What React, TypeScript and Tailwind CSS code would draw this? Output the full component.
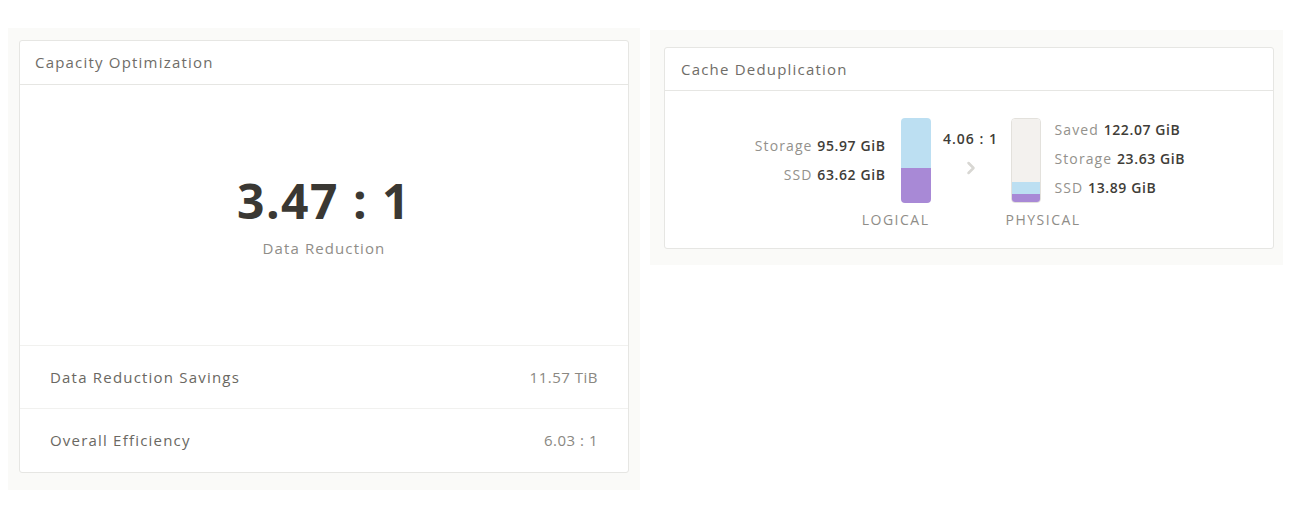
import { ChevronRight } from 'lucide-react'

const font = { fontFamily: '"Open Sans", "Liberation Sans", sans-serif' }

const StatRow = ({ label, value, last }: { label: string; value: string; last?: boolean }) => (
    <div className={`flex items-center justify-between h-[63px] px-[30px] ${last ? '' : 'border-b border-[#f1f1ef]'}`}>
        <span className="text-[15px] tracking-[1.2px] text-[#6a6862]">{label}</span>
        <span className="text-[15px] tracking-[0.5px] text-[#8a8882]">{value}</span>
    </div>
)

const CapacityCard = () => (
    <div className="w-[632px] bg-[#fafaf8] pt-[12px] pl-[11px] pb-[17px]">
        <div className="w-[610px] h-[433px] bg-white border border-[#e6e6e3] rounded-[3px] flex flex-col">
            <div className="h-[44px] flex items-center px-[15px] border-b border-[#e6e6e3]">
                <span className="text-[15px] tracking-[1.2px] text-[#6f6d68]">Capacity Optimization</span>
            </div>
            <div className="h-[261px] flex flex-col items-center border-b border-[#f1f1ef] pt-[88px]">
                <span className="text-[48px] leading-[56px] font-bold text-[#3a3833] tracking-[1.5px]">3.47 : 1</span>
                <span className="mt-[8px] text-[15px] tracking-[1.1px] text-[#8f8d88]">Data Reduction</span>
            </div>
            <StatRow label="Data Reduction Savings" value="11.57 TiB" />
            <StatRow label="Overall Efficiency" value="6.03 : 1" last />
        </div>
    </div>
)

const Line = ({ label, value }: { label: string; value: string }) => (
    <div className="h-[29px] leading-[29px] whitespace-nowrap text-[14px]">
        <span className="tracking-[1.1px] text-[#93918c]">{label} </span>
        <span className="tracking-[0.6px] font-semibold text-[#3f3d38]">{value}</span>
    </div>
)

const CacheCard = () => (
    <div className="mt-[2px] w-[633px] bg-[#fafaf8] pt-[17px] pl-[14px] pb-[16px]">
        <div className="w-[610px] h-[202px] bg-white border border-[#e6e6e3] rounded-[3px] flex flex-col">
            <div className="h-[43px] flex items-center px-[16px] border-b border-[#e6e6e3]">
                <span className="text-[15px] tracking-[1.2px] text-[#6f6d68]">Cache Deduplication</span>
            </div>
            <div className="flex justify-center pt-[27px] pl-[2px]">
                <div className="flex items-start">
                    <div className="flex flex-col items-end pt-[13px]">
                        <Line label="Storage" value="95.97 GiB" />
                        <Line label="SSD" value="63.62 GiB" />
                    </div>
                    <div className="ml-[15px] w-[30px] flex flex-col items-end">
                        <div className="w-[30px] h-[85px] rounded-[4px] overflow-hidden flex flex-col">
                            <div className="h-[50px] bg-[#bcdff2]" />
                            <div className="flex-1 bg-[#a889d6]" />
                        </div>
                        <span className="mt-[6px] mr-[1px] text-[14px] tracking-[1.5px] text-[#8f8d88] whitespace-nowrap">LOGICAL</span>
                    </div>
                    <div className="mx-[12px] w-[56px] flex flex-col items-center pt-[10px]">
                        <span className="text-[14px] tracking-[1px] font-semibold text-[#3f3d38] whitespace-nowrap">4.06 : 1</span>
                        <ChevronRight className="mt-[9px] w-[20px] h-[20px] text-[#d8d7d3]" strokeWidth={3} />
                    </div>
                    <div className="w-[30px] flex flex-col items-start">
                        <div className="w-[30px] h-[85px] rounded-[4px] overflow-hidden flex flex-col border border-[#e3e1dc]">
                            <div className="flex-1 bg-[#f3f1ee]" />
                            <div className="h-[12px] bg-[#bcdff2]" />
                            <div className="h-[8px] bg-[#a889d6]" />
                        </div>
                        <span className="mt-[6px] -ml-[5px] text-[14px] tracking-[1.5px] text-[#8f8d88] whitespace-nowrap">PHYSICAL</span>
                    </div>
                    <div className="ml-[14px] flex flex-col items-start -mt-[3px]">
                        <Line label="Saved" value="122.07 GiB" />
                        <Line label="Storage" value="23.63 GiB" />
                        <Line label="SSD" value="13.89 GiB" />
                    </div>
                </div>
            </div>
        </div>
    </div>
)

export default function App() {
    return (
        <div className="w-[1300px] h-[520px] bg-white pt-[28px] pl-[8px] flex items-start gap-[10px]" style={font}>
            <CapacityCard />
            <CacheCard />
        </div>
    )
}
